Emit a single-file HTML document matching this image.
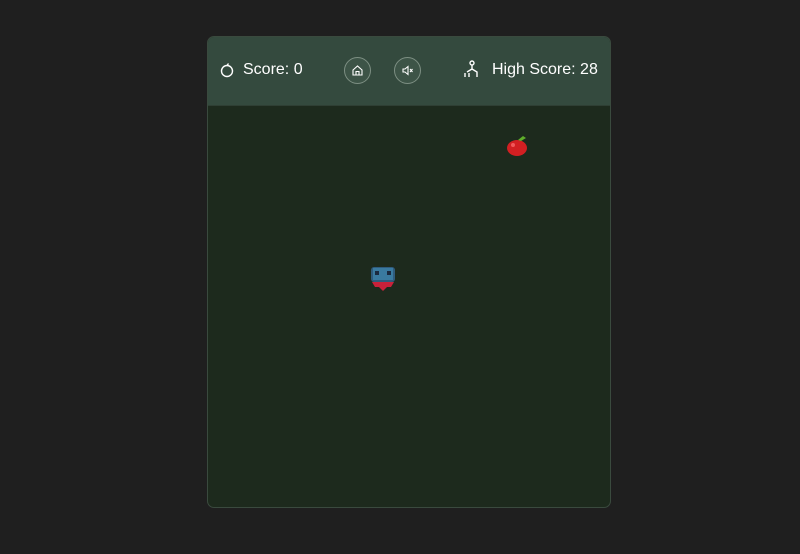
<!DOCTYPE html><html><head><style>
body{margin:0;background:#1f1f1f;width:800px;height:554px;position:relative;font-family:"Liberation Sans",sans-serif;overflow:hidden}
.card{position:absolute;left:207px;top:36px;width:402px;height:470px;border:1px solid #3a4a3e;border-radius:7px;background:#1d2a1d;overflow:hidden}
.hdr{position:absolute;left:0;top:0;width:402px;height:68px;background:#344a3e;border-bottom:1px solid #2f3f34}
.t{position:absolute;top:24px;color:#fff;font-size:16px}
.btn{position:absolute;top:20px;width:25px;height:25px;border:1px solid #7d8f83;border-radius:50%;background:#3d5447}
</style></head><body>
<div class="card">
<div class="hdr">
<svg style="position:absolute;left:11px;top:25px" width="16" height="16" viewBox="0 0 16 16" fill="none" stroke="#fff" stroke-width="1.4"><circle cx="8" cy="9" r="5.5"/><path d="M8 3.5 L9.5 1.5"/></svg>
<div class="t" style="left:35px">Score: 0</div>
<div class="btn" style="left:136px"><svg width="25" height="25" viewBox="0 0 25 25" fill="none" stroke="#fff" stroke-width="1.1"><path d="M8 12 L12.5 8 L17 12 V17 H8 Z M11 17 V13.5 H14 V17"/></svg></div>
<div class="btn" style="left:186px"><svg width="25" height="25" viewBox="0 0 25 25" fill="none" stroke="#fff" stroke-width="1.1"><path d="M8 11 H10 L13 8.5 V16.5 L10 14 H8 Z M15 11 L17.5 14 M17.5 11 L15 14"/></svg></div>
<svg style="position:absolute;left:255px;top:23px" width="18" height="20" viewBox="0 0 18 20" fill="none" stroke="#fff" stroke-width="1.4"><circle cx="9" cy="3" r="2"/><path d="M9 5 V10 M4 12 L9 9 L14 12 V17 M2 17 V13 M6 17 V13"/></svg>
<div class="t" style="left:284px">High Score: 28</div>
</div>
<svg style="position:absolute;left:297px;top:97px" width="24" height="24" viewBox="0 0 24 24"><ellipse cx="12" cy="14" rx="10" ry="8" fill="#d21f22"/><circle cx="8" cy="11" r="2" fill="#f0585a"/><path d="M13 6 L18 2 L21 4 L16 7 Z" fill="#5fae2a"/></svg>
<svg style="position:absolute;left:161px;top:228px" width="28" height="27" viewBox="0 0 28 27"><rect x="2" y="2" width="24" height="15" rx="3" fill="#2f5b7d"/><rect x="4" y="3" width="20" height="12" fill="#3a7aa0"/><rect x="6" y="6" width="4" height="4" fill="#1b2a40"/><rect x="18" y="6" width="4" height="4" fill="#1b2a40"/><path d="M3 17 H25 L22 22 H18 L14 26 L10 22 H6 Z" fill="#c9213a"/></svg>
</div>
</body></html>
